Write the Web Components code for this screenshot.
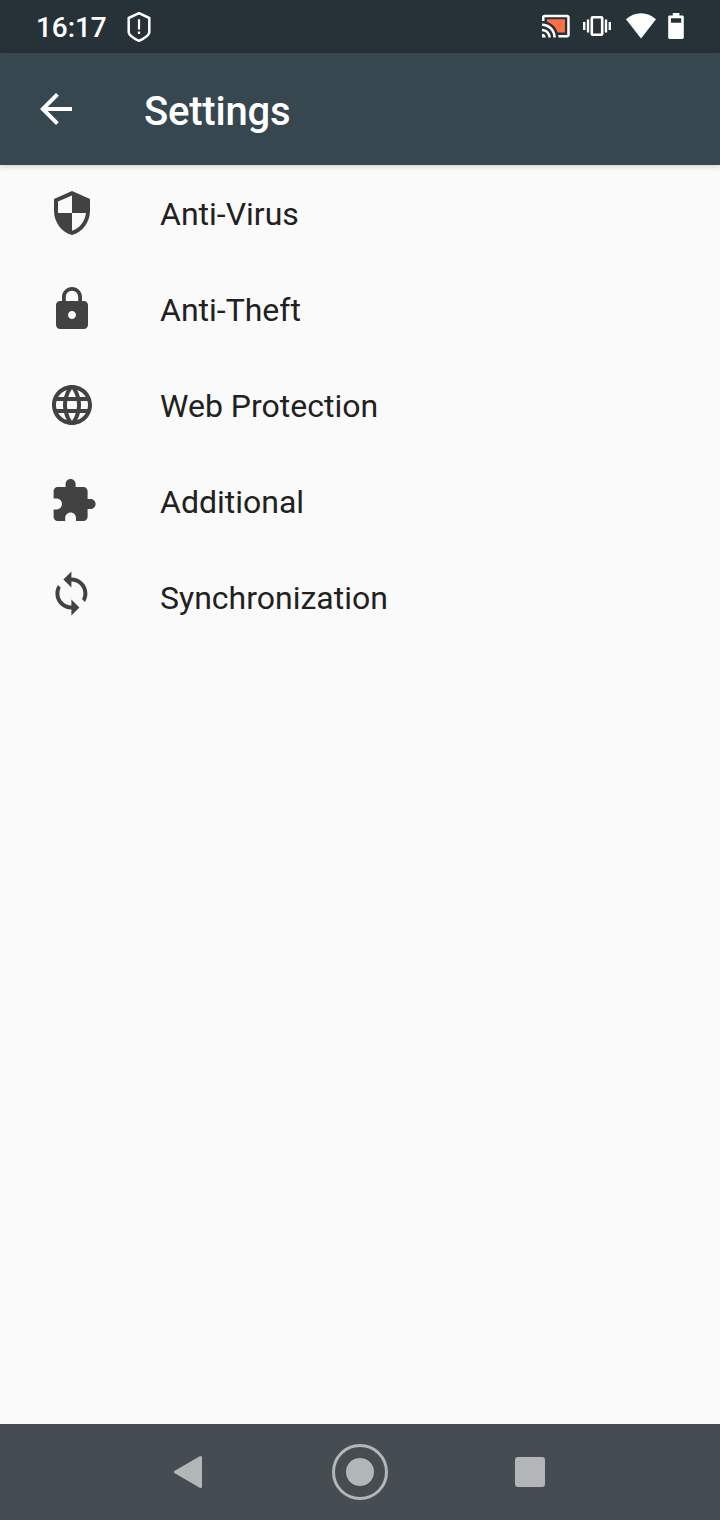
<!DOCTYPE html>
<html lang="en">
<head>
<meta charset="utf-8">
<title>Settings</title>
<style>
body{margin:0;background:#fafafa;font-family:Roboto,"Liberation Sans",sans-serif}
</style>
</head>
<body>
<settings-screen></settings-screen>
<script>
const define = (name, html) => {
  const t = document.createElement('template');
  t.innerHTML = html;
  customElements.define(name, class extends HTMLElement {
    constructor() {
      super();
      this.attachShadow({mode: 'open'}).append(t.content.cloneNode(true));
    }
  });
};

const ICONS = {
  security: '<path d="M12 1 3 5v6c0 5.55 3.84 10.74 9 12 5.16-1.26 9-6.45 9-12V5zm0 10.99h7c-.53 4.12-3.28 7.79-7 8.94V12H5V6.3l7-3.11z"/>',
  lock: '<path d="M18 8h-1V6c0-2.76-2.24-5-5-5S7 3.24 7 6v2H6c-1.1 0-2 .9-2 2v10c0 1.1.9 2 2 2h12c1.1 0 2-.9 2-2V10c0-1.1-.9-2-2-2zm-6 9c-1.1 0-2-.9-2-2s.9-2 2-2 2 .9 2 2-.9 2-2 2zm3.1-9H8.9V6c0-1.71 1.39-3.1 3.1-3.1s3.1 1.39 3.1 3.1z"/>',
  globe: '<path d="M11.99 2C6.47 2 2 6.48 2 12s4.47 10 9.99 10C17.52 22 22 17.52 22 12S17.52 2 11.99 2zm6.93 6h-2.95c-.32-1.25-.78-2.45-1.38-3.56 1.84.63 3.37 1.91 4.33 3.56zM12 4.04c.83 1.2 1.48 2.53 1.91 3.96h-3.82c.43-1.43 1.08-2.76 1.91-3.96zM4.26 14C4.1 13.36 4 12.69 4 12s.1-1.36.26-2h3.38c-.08.66-.14 1.32-.14 2s.06 1.34.14 2zm.82 2h2.95c.32 1.25.78 2.45 1.38 3.56-1.84-.63-3.37-1.9-4.33-3.56zm2.95-8H5.08c.96-1.66 2.49-2.93 4.33-3.56C8.81 5.55 8.35 6.75 8.03 8zM12 19.96c-.83-1.2-1.48-2.53-1.91-3.96h3.82c-.43 1.43-1.08 2.76-1.91 3.96zM14.34 14H9.66c-.09-.66-.16-1.32-.16-2s.07-1.35.16-2h4.68c.09.65.16 1.32.16 2s-.07 1.34-.16 2zm.25 5.56c.6-1.11 1.06-2.31 1.38-3.56h2.95c-.96 1.65-2.49 2.93-4.33 3.56zM16.36 14c.08-.66.14-1.32.14-2s-.06-1.34-.14-2h3.38c.16.64.26 1.31.26 2s-.1 1.36-.26 2z"/>',
  extension: '<path d="M20.5 11H19V7c0-1.1-.9-2-2-2h-4V3.500C13 2.120 11.880 1 10.500 1S8 2.120 8 3.500V5H4c-1.100 0-1.990.9-1.990 2v3.800H3.500c1.490 0 2.700 1.210 2.700 2.700s-1.210 2.700-2.700 2.700H2V20c0 1.100.9 2 2 2h3.800v-1.500c0-1.490 1.210-2.700 2.700-2.700s2.700 1.210 2.700 2.700V22H17c1.100 0 2-.9 2-2v-4h1.500c1.380 0 2.500-1.120 2.500-2.500S21.880 11 20.500 11z" transform="translate(.8 0)"/>',
  sync: '<path transform="translate(-.3 -1.800)" d="M12 4V1L8 5l4 4V6c3.310 0 6 2.690 6 6 0 1.010-.25 1.970-.7 2.800l1.460 1.460C19.540 15.030 20 13.570 20 12c0-4.420-3.580-8-8-8zm0 14c-3.310 0-6-2.690-6-6 0-1.010.25-1.970.7-2.800L5.240 7.740C4.460 8.970 4 10.430 4 12c0 4.420 3.580 8 8 8v3l4-4-4-4z"/>',
  back: '<path d="M20 11H7.830l5.590-5.590L12 4l-8 8 8 8 1.410-1.410L7.830 13H20z"/>'
};
customElements.define('md-icon', class extends HTMLElement {
  constructor() {
    super();
    this.attachShadow({mode: 'open'});
  }
  connectedCallback() {
    this.shadowRoot.innerHTML = `<style>:host{display:block;width:48px;height:48px;flex:none}svg{display:block;fill:currentColor;overflow:visible}</style>
      <svg width="48" height="48" viewBox="0 0 24 24">${ICONS[this.getAttribute('name')]}</svg>`;
  }
});

define('status-bar', `<style>
:host{display:flex;align-items:center;height:53px;box-sizing:border-box;padding:0 35px 0 36px;background:#263238;color:#fff}
.time{font-size:28px;line-height:54px;font-weight:500;letter-spacing:-.1px;width:91px;padding-top:2px;box-sizing:border-box}
svg{display:block;flex:none;height:53px}.gap{flex:1}
</style>
<span class="time">16:17</span>
<svg width="24" height="53" viewBox="127 0 24 53" fill="none" stroke="#fff" stroke-width="2.500" stroke-linejoin="round"><path d="M139 13.200 149.300 18V32.500Q148.500 36.500 139 40.800 129.500 36.500 128.700 32.500V18z"/><path d="M139 19.300v10.200M139 31.600v2.400" stroke-width="2.200"/></svg>
<span class="gap"></span>
<svg width="145" height="53" viewBox="540 0 145 53" fill="#fff">
<g transform="translate(540.750 11) scale(1.260)"><path d="M21 3H3c-1.100 0-2 .9-2 2v3h2V5h18v14h-7v2h7c1.100 0 2-.9 2-2V5c0-1.100-.9-2-2-2zM1 18v3h3c0-1.660-1.340-3-3-3zM1 14v2c2.760 0 5 2.240 5 5h2c0-3.870-3.130-7-7-7zM1 10v2c4.970 0 9 4.030 9 9h2c0-6.080-4.930-11-11-11z"/><path fill="#ff7043" d="M5 6.600v2.030c3.960 1.280 7.090 4.410 8.370 8.370H19.200V6.600z"/></g>
<path d="M583 22h2.400v8H583zM586.800 19.500h2.400v13h-2.400zM604.800 19.500h2.400v13h-2.400zM608.600 22h2.400v8h-2.400z"/>
<rect x="591.800" y="17.200" width="10.400" height="17.600" rx="1" fill="none" stroke="#fff" stroke-width="2.600"/>
<path d="M626 19.200Q632.500 13.200 641 13.200T656 19.200L641 38.500z"/>
<path fill-rule="evenodd" d="M672.800 13h6.600v2.400h3q1.400 0 1.400 1.400v20.800q0 1.400-1.400 1.400h-12.800q-1.400 0-1.400-1.400V16.800q0-1.400 1.400-1.400h3.200zM671 18.300v4.400h10.200v-4.400z"/>
</svg>`);

define('app-bar', `<style>
:host{display:flex;align-items:center;height:112px;padding:0 32px;box-sizing:border-box;background:#37474f;color:#fff;box-shadow:0 1px 6px rgba(0,0,0,.2);position:relative;z-index:1}
h1{margin:6px 0 0 64px;font-size:40px;line-height:48px;font-weight:500;letter-spacing:-.2px}
</style><md-icon name="back"></md-icon><h1><slot></slot></h1>`);

define('settings-item', `<style>
:host{display:flex;align-items:center;gap:64px;height:96px;padding:0 48px;box-sizing:border-box;color:#212121}
.label{font-size:32px;line-height:40px;padding-top:2px}
::slotted(md-icon){color:#424242}
</style><slot name="icon"></slot><span class="label"><slot></slot></span>`);

define('nav-bar', `<style>
:host{display:grid;grid-template-columns:repeat(3,170px);justify-content:center;align-items:center;justify-items:center;height:96px;background:#454d52}
svg{display:block}
</style>
<svg width="60" height="60" viewBox="0 0 60 60" fill="#b2b6b7" stroke="#b2b6b7" stroke-width="3" stroke-linejoin="round"><path d="M15.500 30 40.500 15.500v29z" /></svg>
<svg width="60" height="60" viewBox="0 0 60 60"><circle cx="30" cy="30" r="14" fill="#b2b6b7"/><circle cx="30" cy="30" r="26.500" fill="none" stroke="#b2b6b7" stroke-width="3"/></svg>
<svg width="60" height="60" viewBox="0 0 60 60"><rect x="15" y="15" width="30" height="30" rx="3" fill="#b2b6b7"/></svg>`);

define('settings-screen', `<style>
:host{display:flex;flex-direction:column;width:720px;height:1520px;background:#fafafa;overflow:hidden}
main{flex:1}
</style>
<status-bar></status-bar>
<app-bar>Settings</app-bar>
<main>
<settings-item><md-icon slot="icon" name="security"></md-icon>Anti-Virus</settings-item>
<settings-item><md-icon slot="icon" name="lock"></md-icon>Anti-Theft</settings-item>
<settings-item><md-icon slot="icon" name="globe"></md-icon>Web Protection</settings-item>
<settings-item><md-icon slot="icon" name="extension"></md-icon>Additional</settings-item>
<settings-item><md-icon slot="icon" name="sync"></md-icon>Synchronization</settings-item>
</main>
<nav-bar></nav-bar>`);
</script>
</body>
</html>
